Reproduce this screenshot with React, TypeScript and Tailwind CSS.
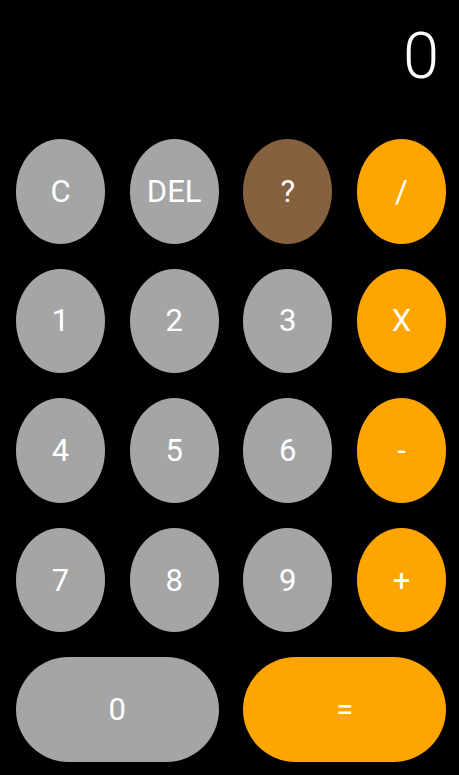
const keys: { label: string; tone: "gray" | "brown" | "orange"; wide?: boolean }[] = [
  { label: "C", tone: "gray" },
  { label: "DEL", tone: "gray" },
  { label: "?", tone: "brown" },
  { label: "/", tone: "orange" },
  { label: "1", tone: "gray" },
  { label: "2", tone: "gray" },
  { label: "3", tone: "gray" },
  { label: "X", tone: "orange" },
  { label: "4", tone: "gray" },
  { label: "5", tone: "gray" },
  { label: "6", tone: "gray" },
  { label: "-", tone: "orange" },
  { label: "7", tone: "gray" },
  { label: "8", tone: "gray" },
  { label: "9", tone: "gray" },
  { label: "+", tone: "orange" },
  { label: "0", tone: "gray", wide: true },
  { label: "=", tone: "orange", wide: true },
];

const toneClass = {
  gray: "bg-[#a5a5a5]",
  brown: "bg-[#85613f]",
  orange: "bg-[#ffa500]",
};

function Key({ label, tone, wide }: { label: string; tone: "gray" | "brown" | "orange"; wide?: boolean }) {
  return (
    <button
      className={`${toneClass[tone]} ${wide ? "col-span-2 rounded-full" : "rounded-[50%]"} h-[104.6px] flex items-center justify-center text-white text-[31px] leading-none`}
    >
      {label}
    </button>
  );
}

export default function App() {
  return (
    <div className="w-[459px] h-[775px] bg-black overflow-hidden" style={{ fontFamily: "Roboto, 'Liberation Sans', sans-serif" }}>
      <div className="pt-[24px] pr-5 text-right text-white text-[65px] font-light leading-none">0</div>
      <div className="mt-[50px] pl-4 grid grid-cols-[repeat(4,89px)] gap-x-[24.67px] gap-y-[25px]">
        {keys.map((k) => (
          <Key key={k.label} {...k} />
        ))}
      </div>
    </div>
  );
}
